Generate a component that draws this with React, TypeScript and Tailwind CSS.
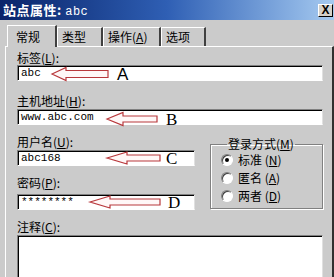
import React from "react";

const cjk = "font-['SimSun','Noto_Sans_CJK_SC',sans-serif]";

function Mn({ c }: { c: string }) {
  return (
    <span>
      (<u>{c}</u>)
    </span>
  );
}

function Label({ text, m, className = "" }: { text: string; m: string; className?: string }) {
  return (
    <div className={`h-[12px] text-[12px] leading-[12px] text-black ${className}`}>
      {text}
      <Mn c={m} />:
    </div>
  );
}

function Input({ value, className = "" }: { value: string; className?: string }) {
  return (
    <div
      className={`h-[16px] bg-white border border-t-[#808080] border-l-[#808080] border-b-white border-r-[#e0e0e0] shadow-[inset_1px_1px_0_#000] flex items-center pl-[3px] font-['Liberation_Mono',monospace] text-[11px] leading-none text-black ${className}`}
    >
      {value}
    </div>
  );
}

function Radio({ checked, text, m }: { checked?: boolean; text: string; m: string }) {
  return (
    <div className="h-[18px] flex items-center gap-[5px]">
      <div className="w-[12px] h-[12px] rounded-full bg-white border border-t-[#808080] border-l-[#808080] border-b-white border-r-white shadow-[inset_1px_1px_0_#404040] flex items-center justify-center">
        {checked && <div className="w-[4px] h-[4px] rounded-full bg-black" />}
      </div>
      <div className="text-[12px] leading-[12px] text-black">
        {text} <Mn c={m} />
      </div>
    </div>
  );
}

function Arrow({ tip, base, tail, cy, hh, sh }: { tip: number; base: number; tail: number; cy: number; hh: number; sh: number }) {
  const pts = [
    [tip, cy],
    [base, cy - hh],
    [base, cy - sh],
    [tail, cy - sh],
    [tail, cy + sh],
    [base, cy + sh],
    [base, cy + hh],
  ]
    .map((p) => p.join(","))
    .join(" ");
  return <polygon points={pts} fill="#fff7f7" stroke="#b8383c" strokeWidth="1.2" strokeLinejoin="miter" />;
}

export default function App() {
  return (
    <div className={`relative w-[334px] h-[277px] overflow-hidden bg-[#cbcbcb] ${cjk}`}>
      {/* title bar */}
      <div className="h-[20px] flex items-center justify-between bg-gradient-to-r from-[#0a246a] via-[#2f5fb4] to-[#a6caf0] pl-[3px] pr-[1px]">
        <div className="text-white text-[13px] font-bold leading-none tracking-[0.5px]">
          站点属性: <span className="font-normal font-['Liberation_Mono',monospace] text-[12px]">abc</span>
        </div>
        <div className="w-[15px] h-[13px] bg-[#d4d0c8] border border-t-white border-l-white border-b-black border-r-black flex items-center justify-center text-[12px] font-bold leading-none text-black font-['Liberation_Sans',sans-serif]">
          X
        </div>
      </div>

      <div className="pl-[5px]">
        {/* tabs */}
        <div className="flex items-end h-[26px] pl-[2px]">
          <div className="relative z-10 -mb-px w-[50px] h-[22px] bg-[#cbcbcb] border-t border-l border-white border-r-2 border-r-[#404040] flex items-center pl-[8px] text-[12px] leading-none text-black">
            常规
          </div>
          <div className="w-[46px] h-[19px] border-t border-l border-white border-r-2 border-r-[#404040] flex items-center pl-[4px] text-[12px] leading-none text-black">
            类型
          </div>
          <div className="w-[58px] h-[19px] border-t border-l border-white border-r-2 border-r-[#404040] flex items-center pl-[4px] text-[12px] leading-none text-black">
            操作<Mn c="A" />
          </div>
          <div className="w-[45px] h-[19px] border-t border-l border-white border-r-2 border-r-[#404040] flex items-center pl-[4px] text-[12px] leading-none text-black">
            选项
          </div>
        </div>

        {/* panel */}
        <div className="h-[240px] border-t border-l border-white border-r-2 border-r-[#303030] pl-[11px] pr-[9px]">
          <Label text="标签" m="L" className="mt-[5px]" />
          <Input value="abc" className="mt-px" />
          <Label text="主机地址" m="H" className="mt-[14px]" />
          <Input value="www.abc.com" className="mt-[2px]" />

          <div className="flex">
            <div className="w-[178px]">
              <Label text="用户名" m="U" className="mt-[11px]" />
              <Input value="abc168" className="mt-[2px]" />
              <Label text="密码" m="P" className="mt-[11px]" />
              <Input value="********" className="mt-[5px]" />
            </div>
            <fieldset className="ml-[15px] mt-[13px] w-[113px] h-[71px] border border-[#808080] shadow-[1px_1px_0_#fff,inset_1px_1px_0_#fff] pl-[10px]">
              <legend className="ml-[6px] px-[1px] text-[12px] leading-[12px] text-black">
                登录方式<Mn c="M" />
              </legend>
              <div className="mt-[1px]">
                <Radio checked text="标准" m="N" />
                <Radio text="匿名" m="A" />
                <Radio text="两者" m="D" />
              </div>
            </fieldset>
          </div>

          <Label text="注释" m="C" className="mt-[11px]" />
          <div className="mt-[2px] h-[60px] bg-white border border-t-[#808080] border-l-[#808080] border-b-white border-r-[#e0e0e0] shadow-[inset_1px_1px_0_#000]" />
        </div>
      </div>

      {/* annotation arrows */}
      <svg className="absolute left-0 top-0 pointer-events-none" width="334" height="277" viewBox="0 0 334 277">
        <Arrow tip={52} base={66} tail={108} cy={74} hh={6.5} sh={3.5} />
        <Arrow tip={107} base={123} tail={157} cy={119} hh={6.5} sh={3} />
        <Arrow tip={107} base={127} tail={160} cy={158} hh={6} sh={3} />
        <Arrow tip={90} base={110} tail={160} cy={202} hh={6} sh={3} />
      </svg>
      <div className="absolute left-[117px] top-[66px] text-[17px] leading-[17px] text-black font-['Liberation_Sans',sans-serif]">A</div>
      <div className="absolute left-[166px] top-[111px] text-[17px] leading-[17px] text-black font-['Liberation_Serif',serif]">B</div>
      <div className="absolute left-[166px] top-[150px] text-[17px] leading-[17px] text-black font-['Liberation_Serif',serif]">C</div>
      <div className="absolute left-[168px] top-[194px] text-[17px] leading-[17px] text-black font-['Liberation_Serif',serif]">D</div>
    </div>
  );
}
